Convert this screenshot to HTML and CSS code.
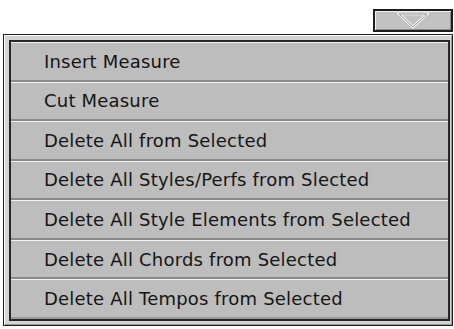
FILE: index.html
```html
<!DOCTYPE html>
<html lang="en">
<head>
    <meta charset="UTF-8">
    <meta name="viewport" content="width=device-width, initial-scale=1.0">
    <title>Song Edit Menu</title>
    <link rel="stylesheet" href="styles.css">
</head>
<body>
    <div class="page">
        <div class="picker">
            <button class="drop-btn" type="button">
                <svg width="32" height="17" viewBox="0 0 32 17">
                    <polygon points="2,2 30,2 16,15" fill="none" stroke="#fafafa" stroke-width="2.4"/>
                    <polygon points="2,2 30,2 16,15" fill="none" stroke="#8e8e8e" stroke-width="1"/>
                </svg>
            </button>
        </div>

        <div class="frame">
            <ul class="menu">
                <li class="item">Insert Measure</li>
                <li class="item">Cut Measure</li>
                <li class="item">Delete All from Selected</li>
                <li class="item">Delete All Styles/Perfs from Slected</li>
                <li class="item">Delete All Style Elements from Selected</li>
                <li class="item">Delete All Chords from Selected</li>
                <li class="item">Delete All Tempos from Selected</li>
            </ul>
        </div>
    </div>
</body>
</html>
```

FILE: styles.css
```css
body {
    margin: 0;
    background: #fff;
    font-family: 'DejaVu Sans', Verdana, sans-serif;
}
.page {
    padding: 9px 1px 0 3px;
}
.picker {
    display: flex;
    justify-content: flex-end;
}
.drop-btn {
    width: 80px;
    height: 23px;
    padding: 0;
    margin: 0;
    display: flex;
    align-items: center;
    justify-content: center;
    background: #c2c2c2;
    border: 2px solid #1c1c1c;
    box-shadow: inset 1px 1px 0 #f2f2f2, inset -1px -1px 0 #8a8a8a;
}
.frame {
    margin-top: 2px;
    border: 1px solid #1e1e1e;
    padding: 5px 2px 4px 5px;
    background: #d4d4d4;
    box-shadow: inset 1px 1px 0 #fff, inset -1px -1px 0 #9a9a9a;
}
.menu {
    list-style: none;
    margin: 0;
    padding: 0;
    border: 2px solid #262626;
    display: grid;
    grid-template-rows: repeat(7, 1fr);
    height: 277px;
}
.item {
    display: flex;
    align-items: center;
    padding-left: 33px;
    background: #bdbdbd;
    border-top: 1px solid #f4f4f4;
    border-bottom: 2px solid #8a8a8a;
    font-size: 18px;
    letter-spacing: 0.2px;
    color: #151515;
    white-space: nowrap;
}
.item:last-child {
    border-bottom: 2px solid #9a9a9a;
}
```
